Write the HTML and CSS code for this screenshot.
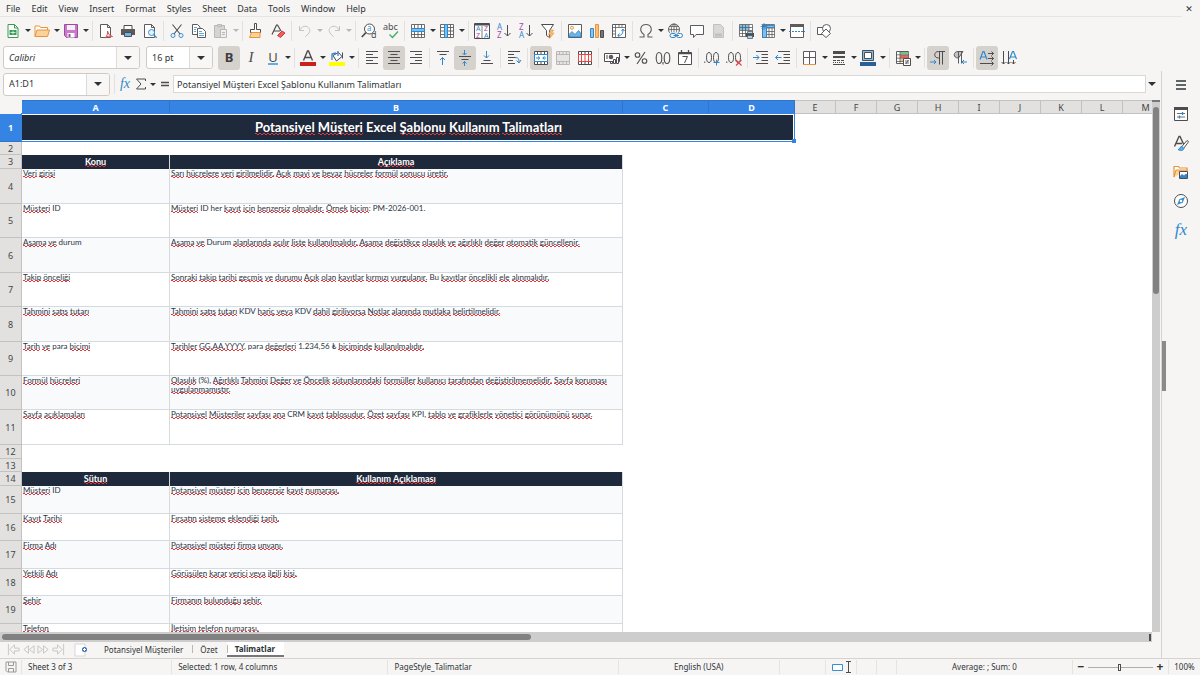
FILE: index.html
```html
<!DOCTYPE html>
<html lang="tr">
<head>
<meta charset="utf-8">
<title>Talimatlar</title>
<link rel="stylesheet" href="styles.css">
</head>
<body>
<div class="app">
<header class="menubar">
  <nav class="menus" aria-label="Menu">
    <button>File</button><button>Edit</button><button>View</button><button>Insert</button><button>Format</button><button>Styles</button><button>Sheet</button><button>Data</button><button>Tools</button><button>Window</button><button>Help</button>
  </nav>
  <button class="close" aria-label="Close">✕</button>
</header>

<div class="toolbar" role="toolbar" aria-label="Standard">
  <button class="tool" aria-label="New"><svg viewBox="0 0 16 16"><path d="M3 1.500h6.500l3.500 3.500v9.500H3z" fill="#fff" stroke="#3a9b56"/><path d="M9.500 1.500V5H13" fill="none" stroke="#3a9b56"/><path d="M4.500 7h7v5h-7z" fill="#3a9b56"/><path d="M5.500 9.500h5M8 7.500v4" stroke="#fff" stroke-width=".7"/></svg></button><button class="drop" aria-label="New options"></button>
  <button class="tool" aria-label="Open"><svg viewBox="0 0 16 16"><path d="M1 13.500V3h4.500l1 1.500h7V7" fill="#fff" stroke="#e8943c"/><path d="M1 13.500 3 7h12.500l-2 6.500z" fill="#fbd29a" stroke="#e8943c"/></svg></button><button class="drop" aria-label="Open options"></button>
  <button class="tool" aria-label="Save"><svg viewBox="0 0 16 16"><path d="M1.500 1.500h13v13h-11l-2-2z" fill="#c57bc8" stroke="#9a4ba0"/><path d="M4 2h8v5H4z" fill="#f8eef8"/><path d="M4.500 10h7v4.500h-7z" fill="#fff"/><path d="M5.500 11h2v3h-2z" fill="#9a4ba0"/></svg></button><button class="drop" aria-label="Save options"></button>
  <span class="sep"></span>
  <button class="tool" aria-label="Export as PDF"><svg viewBox="0 0 16 16"><path d="M2.500 1.500h7L12.500 4.500v10h-10z" fill="#fff" stroke="#5c5c5e"/><path d="M9.500 1.500v3h3" fill="none" stroke="#5c5c5e"/><path d="M7 15c2-2 3-4 2.500-7 1 3 2 5 5 5.500-2.500-.8-5.500-.3-7.500 1.500" fill="#fff" stroke="#e04848"/></svg></button>
  <button class="tool" aria-label="Print"><svg viewBox="0 0 16 16"><path d="M4 2.500h8v4H4z" fill="#fff" stroke="#4d4d4f"/><path d="M1 6h14v6H1z" fill="#5a5a5c"/><path d="M4.500 9.500h7v4h-7z" fill="#6cb5e8" stroke="#4d4d4f"/></svg></button>
  <button class="tool" aria-label="Print preview"><svg viewBox="0 0 16 16"><path d="M2.500 1.500h7l3 3v10h-10z" fill="#fff" stroke="#5c5c5e"/><path d="M9.500 1.500v3h3" fill="none" stroke="#5c5c5e"/><circle cx="9.500" cy="9.500" r="3" fill="#e5f2fb" stroke="#3a8fd0"/><path d="m11.700 11.700 3 3" stroke="#3a8fd0" stroke-width="1.300"/></svg></button>
  <span class="sep"></span>
  <button class="tool" aria-label="Cut"><svg viewBox="0 0 16 16" fill="none"><path d="M3.500 1.500 11 11M12.500 1.500 5 11" stroke="#4d4d4f" stroke-width="1.100"/><circle cx="4" cy="12.500" r="2" stroke="#3a8fd0"/><circle cx="12" cy="12.500" r="2" stroke="#3a8fd0"/></svg></button>
  <button class="tool" aria-label="Copy"><svg viewBox="0 0 16 16" fill="#fff" stroke="#5c5c5e"><path d="M1.500 1.500h5L9 4v7.500H1.500z"/><path d="M6.500 5.500h5l3 3v6h-8z"/><path d="M3 4.500h3M3 6.500h2M3 8.500h2M8 8.500h3M8 10.500h5M8 12.500h5" stroke="#3a8fd0" stroke-width=".8"/></svg></button>
  <button class="tool" aria-label="Paste" disabled><svg viewBox="0 0 16 16" fill="#d5d4d2" stroke="#b9b8b6"><path d="M1.500 2.500h10v12h-10z"/><path d="M4.500 1.500h4v2h-4z"/><path d="M7.500 6.500h6v8h-6z" fill="#f1f0ef"/><path d="M9 9.500h3M9 11.500h3"/></svg></button><button class="drop" aria-label="Paste options" disabled></button>
  <span class="sep"></span>
  <button class="tool" aria-label="Clone formatting"><svg viewBox="0 0 16 16"><path d="M6.500.5h2v6h4v3h-10v-3h4z" fill="#fff" stroke="#4d4d4f"/><path d="M3.500 9.500h8.500v5H1.500z" fill="#fbd29a" stroke="#e8943c"/></svg></button>
  <button class="tool" aria-label="Clear formatting"><svg viewBox="0 0 16 16" fill="none"><path d="M2 11.500 6.500 2h1L11 8M4 8h6" stroke="#4d4d4f" stroke-width="1.200"/><path d="m7.500 12.500 4.500-4.500 3 2-4.500 4.500z" fill="#e8605f" stroke="#d83a3a"/></svg></button>
  <span class="sep"></span>
  <button class="tool" aria-label="Undo" disabled><svg viewBox="0 0 16 16" fill="none" stroke="#c4c3c1"><path d="M2.500 3v4.500H7M2.500 7.500c2-4 6-5.500 9-3 2.500 2.500 1.500 5.500-3 9"/></svg></button><button class="drop" aria-label="Undo list" disabled></button>
  <button class="tool" aria-label="Redo" disabled><svg viewBox="0 0 16 16" fill="none" stroke="#c4c3c1"><path d="M13.500 3v4.500H9M13.500 7.500c-2-4-6-5.500-9-3-2.500 2.500-1.500 5.500 3 9"/></svg></button><button class="drop" aria-label="Redo list" disabled></button>
  <span class="sep"></span>
  <button class="tool" aria-label="Find and replace"><svg viewBox="0 0 16 16" fill="none"><circle cx="8.500" cy="6" r="5" fill="#fff" stroke="#4d4d4f"/><path d="M5 9.500.8 14" stroke="#4d4d4f" stroke-width="1.800"/><text x="6" y="8" font-size="8" fill="#3a8fd0">a</text><text x="10" y="15" font-size="9" fill="#4d4d4f">d</text></svg></button>
  <button class="tool" aria-label="Spelling"><svg viewBox="0 0 16 16" fill="none"><text x="0" y="7" font-size="9" fill="#4d4d4f">abc</text><path d="m6.500 11.500 3 3 5.500-6" stroke="#3fae62" stroke-width="1.300"/></svg></button>
  <span class="sep"></span>
  <button class="tool" aria-label="Row"><svg viewBox="0 0 16 16"><path d="M1.500 1.500h13v13h-13zM1.500 11.500h13M4.500 1.500v13M8 1.500v13M11.500 1.500v13" fill="#fff" stroke="#5c5c5e" stroke-width=".9"/><path d="M1.500 5.500h13v3h-13z" fill="#7cc0f0" stroke="#2f88cc"/></svg></button><button class="drop" aria-label="Row options"></button>
  <button class="tool" aria-label="Column"><svg viewBox="0 0 16 16"><path d="M1.500 1.500h13v13h-13zM1.500 4.500h13M1.500 8h13M1.500 11.500h13M11.500 1.500v13" fill="#fff" stroke="#5c5c5e" stroke-width=".9"/><path d="M5.500 1.500h3v13h-3z" fill="#7cc0f0" stroke="#2f88cc"/></svg></button><button class="drop" aria-label="Column options"></button>
  <span class="sep"></span>
  <button class="tool" aria-label="Sort"><svg viewBox="0 0 16 16"><path d="M.5.500h15v15H.5z" fill="#fff" stroke="#4d4d4f"/><path d="M1 1h14v1.500H1z" fill="#4d4d4f"/><path d="M8 3v12" stroke="#4d4d4f" stroke-width=".7"/><text x="2" y="8" font-size="7" fill="#2f88cc">A</text><text x="2" y="15" font-size="7" fill="#a34bb0">Z</text><text x="10" y="8" font-size="7" fill="#a34bb0">Z</text><text x="10" y="15" font-size="7" fill="#2f88cc">A</text></svg></button>
  <button class="tool" aria-label="Sort ascending"><svg viewBox="0 0 16 16"><text x="1" y="7" font-size="8" fill="#2f88cc">A</text><text x="1" y="15" font-size="8" fill="#a34bb0">Z</text><path d="M11.500 2v11M8.500 10l3 3 3-3" fill="none" stroke="#4d4d4f"/></svg></button>
  <button class="tool" aria-label="Sort descending"><svg viewBox="0 0 16 16"><text x="1" y="7" font-size="8" fill="#a34bb0">Z</text><text x="1" y="15" font-size="8" fill="#2f88cc">A</text><path d="M11.500 2v11M8.500 10l3 3 3-3" fill="none" stroke="#4d4d4f"/></svg></button>
  <button class="tool" aria-label="AutoFilter"><svg viewBox="0 0 16 16"><path d="M1.500 1.500h12L9.500 7.500v7l-3-2v-5z" fill="#fff" stroke="#4d4d4f"/><path d="m11 7-2.500 4.500h2L9.500 15.500 14 10h-2.500L13.500 7z" fill="#fbc078" stroke="#e8943c" stroke-width=".7"/></svg></button>
  <span class="sep"></span>
  <button class="tool" aria-label="Insert image"><svg viewBox="0 0 16 16"><path d="M1.500 1.500h13v13h-13z" fill="#fff" stroke="#5c5c5e"/><path d="M2 14v-2.500l3-3 3 3 3.500-4L14 10.500V14z" fill="#6cb5e8" stroke="#2a77b5" stroke-width=".7"/><circle cx="5" cy="4.800" r="1.500" fill="#fff" stroke="#e8943c"/></svg></button>
  <button class="tool" aria-label="Insert chart"><svg viewBox="0 0 16 16"><path d="M1.500 5.500h3v9h-3z" fill="#8cc6ef" stroke="#2f88cc"/><path d="M6.500 1.500h3v13h-3z" fill="#fbc078" stroke="#e8943c"/><path d="M11.500 7.500h3v7h-3z" fill="#77767b" stroke="#4d4d4f"/></svg></button>
  <button class="tool" aria-label="Insert pivot table"><svg viewBox="0 0 16 16"><path d="M1.500 1.500h13v13h-13z" fill="#fff" stroke="#5c5c5e"/><path d="M1.500 4.500h13M4.500 1.500v13M8 1.500v3M11 1.500v3M1.500 8h3M1.500 11h3" stroke="#5c5c5e" stroke-width=".8"/><path d="M7 12.500c4 0 5-2 5-6M10.500 8 12 6l1.500 2M8.500 10.500 6.800 12.500l1.700 1.500" fill="none" stroke="#2f88cc"/></svg></button>
  <span class="sep"></span>
  <button class="tool" aria-label="Special character"><svg viewBox="0 0 16 16"><path d="M1.500 14h4.500v-2.500C.5 8 2.500 1.500 8 1.500s7.500 6.500 2 10V14h4.500" fill="none" stroke="#5c5c5e" stroke-width="1.100"/></svg></button><button class="drop" aria-label="Characters"></button>
  <button class="tool" aria-label="Hyperlink"><svg viewBox="0 0 16 16" fill="none"><circle cx="7" cy="6.500" r="5.500" stroke="#5c5c5e"/><path d="M7 1v10M1.500 6.500h11M3 3.500h8" stroke="#5c5c5e" stroke-width=".8"/><ellipse cx="7" cy="6.500" rx="2.700" ry="5.500" stroke="#5c5c5e" stroke-width=".8"/><path d="M2.500 9.500h13.500v6.500H2.500z" fill="#f6f5f4"/><rect x="3" y="10.500" width="6" height="4" rx="2" stroke="#2f88cc"/><rect x="9.500" y="10.500" width="6" height="4" rx="2" stroke="#2f88cc"/><path d="M6.500 12.500h5.500" stroke="#2f88cc"/></svg></button>
  <button class="tool" aria-label="Comment"><svg viewBox="0 0 16 16"><path d="M1.500 2.500h13v9H7l-2.500 3v-3h-3z" fill="#fff" stroke="#5c5c5e"/></svg></button>
  <button class="tool" aria-label="Headers and footers" disabled><svg viewBox="0 0 16 16"><path d="M2.500 1.500h7l3 3v10h-10z" fill="#d9d8d6" stroke="#c2c1bf"/><path d="M4 10.500h7v3H4z" fill="#c2c1bf"/></svg></button>
  <span class="sep"></span>
  <button class="tool" aria-label="Print area"><svg viewBox="0 0 16 16"><path d="M1.500 1.500h13v12h-13z" fill="#fff"/><path d="M1.500 1.500h9.500v5.500H1.500z" fill="#7cc0f0"/><path d="M1.500 1.500h13v12h-13zM1.500 4.500h13M1.500 7.500h13M1.500 10.500h13M4.500 1.500v12M7.500 1.500v12M11 1.500v12" fill="none" stroke="#5c5c5e" stroke-width=".8"/><path d="M8 10h8v4H8z" fill="#4d4d4f"/><path d="M9.500 8.500h5v2h-5zM9.500 12.500h5v3h-5z" fill="#a6d3f2" stroke="#4d4d4f" stroke-width=".7"/></svg></button>
  <button class="tool" aria-label="Freeze rows and columns"><svg viewBox="0 0 16 16"><path d="M2.500 1.500h12v13h-12zM2.500 5h12M2.500 8.500h12M2.500 11.500h12M6.500 1.500v13M9 1.500v13M12 1.500v13" fill="#fff" stroke="#5c5c5e" stroke-width=".8"/><path d="M2.500 2.500h12v2h-8v10h-4z" fill="#7cc0f0" stroke="#2a77b5" stroke-width=".8"/><path d="M4 0v7M.5 3.500h7M1.500 1l5 5M6.500 1l-5 5" stroke="#2a77b5" stroke-width=".7"/></svg></button><button class="drop" aria-label="Freeze options"></button>
  <button class="tool" aria-label="Split window"><svg viewBox="0 0 16 16"><path d="M1.500 1.500h13v13h-13z" fill="#fff" stroke="#5c5c5e"/><path d="M1 1h14v3H1z" fill="#5c5c5e"/><path d="M0 8.500h16" stroke="#2f88cc" stroke-dasharray="2 1"/></svg></button>
  <span class="sep"></span>
  <button class="tool" aria-label="Draw functions"><svg viewBox="0 0 16 16" fill="#fff" stroke="#5c5c5e"><path d="M1.500 4.500h7v7h-7z"/><circle cx="10.500" cy="5.500" r="4"/><path d="m10 6 4.500 4.500-4.500 4-4.500-4z"/></svg></button>
</div>

<div class="toolbar" role="toolbar" aria-label="Formatting">
  <div class="combo font-name"><input class="italic" aria-label="Font name" value="Calibri"><button aria-label="Font list"></button></div>
  <div class="combo font-size"><input aria-label="Font size" value="16 pt"><button aria-label="Size list"></button></div>
  <button class="tool on letter bold" aria-label="Bold">B</button>
  <button class="tool letter ital" aria-label="Italic">I</button>
  <button class="tool letter under" aria-label="Underline"><span>U</span></button><button class="drop" aria-label="Underline options"></button>
  <span class="sep"></span>
  <button class="tool" aria-label="Font color"><svg viewBox="0 0 16 16"><path d="M3.500 10.500 7.500 1h1l4 9.500M5 7.500h6" fill="none" stroke="#4d4d4f" stroke-width="1.400"/><path d="M0 12h16v4H0z" fill="#c9211e"/></svg></button><button class="drop" aria-label="Font colors"></button>
  <button class="tool" aria-label="Highlighting"><svg viewBox="0 0 16 16"><path d="m4 5.500 5.500-3 3.500 4-5.500 4.500z" fill="#fff" stroke="#4d4d4f"/><path d="M3 3.500V10M3 4l4-1M9 1v5" fill="none" stroke="#2f88cc" stroke-width="1.300"/><path d="M13.500 2.500v6" stroke="#4d4d4f"/><path d="M0 12h16v4H0z" fill="#ff0"/></svg></button><button class="drop" aria-label="Highlight colors"></button>
  <span class="sep"></span>
  <button class="tool" aria-label="Align left"><svg viewBox="0 0 16 16" stroke="#4d4d4f"><path d="M2 1.500h12M2 4.500h7M2 7.500h12M2 10.500h7M2 13.500h12"/></svg></button>
  <button class="tool on" aria-label="Align center"><svg viewBox="0 0 16 16" stroke="#4d4d4f"><path d="M2 1.500h12M4.500 4.500h7M2 7.500h12M4.500 10.500h7M2 13.500h12"/></svg></button>
  <button class="tool" aria-label="Align right"><svg viewBox="0 0 16 16" stroke="#4d4d4f"><path d="M2 1.500h12M7 4.500h7M2 7.500h12M7 10.500h7M2 13.500h12"/></svg></button>
  <span class="sep"></span>
  <button class="tool" aria-label="Align top"><svg viewBox="0 0 16 16" fill="none" stroke="#4d4d4f"><path d="M2 1.500h12M4.500 4.500h7"/><path d="M7.500 15V7.500M5 10l2.500-2.500L10 10" stroke="#2f88cc"/></svg></button>
  <button class="tool on" aria-label="Center vertically"><svg viewBox="0 0 16 16" fill="none" stroke="#4d4d4f"><path d="M2 6.500h12M4.500 9.500h7"/><path d="M7.500 0v4.500M5.500 3l2 2 2-2M7.500 16v-4.500M5.500 13.500l2-2 2 2" stroke="#2f88cc"/></svg></button>
  <button class="tool" aria-label="Align bottom"><svg viewBox="0 0 16 16" fill="none" stroke="#4d4d4f"><path d="M4.500 10.500h7M2 13.500h12"/><path d="M7.500 1v7M5 5.500 7.500 8 10 5.500" stroke="#2f88cc"/></svg></button>
  <span class="sep"></span>
  <button class="tool" aria-label="Wrap text"><svg viewBox="0 0 16 16" fill="none" stroke="#4d4d4f"><path d="M2 1.500h12M2 4.500h6M2 7.500h8M2 10.500h5M2 13.500h7"/><path d="M9 7.500c3 0 4 1 4 4.500M10.500 10.500 13 13l2-3" stroke="#2f88cc"/></svg></button>
  <span class="sep"></span>
  <button class="tool on" aria-label="Merge and center cells"><svg viewBox="0 0 16 16"><path d="M1.500 1.500h13v13h-13zM4.500 1.500v3M8 1.500v3M11.500 1.500v3M4.500 11.500v3M8 11.500v3M11.500 11.500v3" fill="#fff" stroke="#4d4d4f"/><path d="M1.500 4.500h13v7h-13z" fill="#fff" stroke="#2f88cc"/><path d="M3 8h3.500M10 8h3M5 6.500 6.800 8 5 9.500M11.500 6.500 9.700 8l1.800 1.500" fill="none" stroke="#2f88cc"/></svg></button>
  <button class="tool" aria-label="Merge cells" disabled><svg viewBox="0 0 16 16"><path d="M1.500 1.500h13v13h-13zM1.500 4.500h13M1.500 11.500h13M4.500 1.500v3M8 1.500v3M11.500 1.500v3M4.500 11.500v3M8 11.500v3M11.500 11.500v3" fill="#e6e5e3" stroke="#b9b8b6"/></svg></button>
  <button class="tool" aria-label="Split cells"><svg viewBox="0 0 16 16"><path d="M1.500 1.500h13v13h-13zM4.500 1.500v3M8 1.500v3M11.500 1.500v3M4.500 11.500v3M8 11.500v3M11.500 11.500v3" fill="#fff" stroke="#4d4d4f"/><path d="M1.500 4.500h13v7h-13zM4.500 4.500v7M8 4.500v7M11.500 4.500v7" fill="#fff" stroke="#e04848"/></svg></button>
  <span class="sep"></span>
  <button class="tool" aria-label="Currency"><svg viewBox="0 0 16 16"><path d="M.5 3.500h15v8H.5z" fill="#fff" stroke="#4d4d4f"/><circle cx="7" cy="7" r="2.300" fill="#5c5c5e"/><path d="M3 5v4" stroke="#4d4d4f"/><path d="M6.500 11.500h2v2h-2zM9.500 9.500h2v4h-2zM12.500 7.500h2v6h-2z" fill="#fff" stroke="#4d4d4f"/></svg></button><button class="drop" aria-label="Currency formats"></button>
  <button class="tool" aria-label="Percent"><svg viewBox="0 0 16 16" fill="none" stroke="#4d4d4f" stroke-width="1.100"><circle cx="4.500" cy="5" r="2.300"/><circle cx="11.500" cy="11" r="2.300"/><path d="M12 2 4 14"/></svg></button>
  <button class="tool" aria-label="Number"><svg viewBox="0 0 16 16" fill="none" stroke="#4d4d4f" stroke-width="1.100"><ellipse cx="4" cy="8" rx="2.800" ry="5.500"/><ellipse cx="12" cy="8" rx="2.800" ry="5.500"/><path d="M8 12v2.500"/></svg></button>
  <button class="tool" aria-label="Date"><svg viewBox="0 0 16 16"><path d="M1.500 2.500h13v12h-13z" fill="#fff" stroke="#4d4d4f"/><path d="M1.500 3.500h13M4.500 0v4M11.500 0v4" stroke="#4d4d4f" stroke-width="1.300"/><path d="M5.500 6.500h5L7.500 13" fill="none" stroke="#4d4d4f"/></svg></button>
  <span class="sep"></span>
  <button class="tool" aria-label="Add decimal place"><svg viewBox="0 0 16 16" fill="none" stroke="#4d4d4f"><ellipse cx="5" cy="7.500" rx="2.500" ry="5"/><ellipse cx="12" cy="7.500" rx="2.500" ry="5"/><path d="M.8 11.500v1.500"/><path d="M12.500 9.500v6M9.500 12.500h6" stroke="#2f88cc"/></svg></button>
  <button class="tool" aria-label="Delete decimal place"><svg viewBox="0 0 16 16" fill="none" stroke="#4d4d4f"><ellipse cx="5" cy="7.500" rx="2.500" ry="5"/><ellipse cx="12" cy="7.500" rx="2.500" ry="5"/><path d="M.8 11.500v1.500"/><path d="m10 10 5.500 5.500m0-5.500L10 15.500" stroke="#e04848" stroke-width="1.200"/></svg></button>
  <span class="sep"></span>
  <button class="tool" aria-label="Increase indent"><svg viewBox="0 0 16 16" fill="none" stroke="#4d4d4f"><path d="M3 1.500h12M8.500 4.500H15M8.500 7.500H15M8.500 10.500H15M3 13.500h12"/><path d="M0 7.500h6M3.500 5 6 7.500 3.500 10" stroke="#2f88cc"/></svg></button>
  <button class="tool" aria-label="Decrease indent"><svg viewBox="0 0 16 16" fill="none" stroke="#4d4d4f"><path d="M3 1.500h12M8.500 4.500H15M8.500 7.500H15M8.500 10.500H15M3 13.500h12"/><path d="M.5 7.500h6M3 5 .5 7.500 3 10" stroke="#2f88cc"/></svg></button>
  <span class="sep"></span>
  <button class="tool" aria-label="Borders"><svg viewBox="0 0 16 16"><path d="M1.500 1.500h12v13h-12z" fill="#fff" stroke="#5c5c5e"/><path d="M7.500 1.500v13M1.500 7.500h12" stroke="#5c5c5e"/><path d="M1 14.500h13" stroke="#e8943c"/></svg></button><button class="drop" aria-label="Border options"></button>
  <button class="tool" aria-label="Border style"><svg viewBox="0 0 16 16" stroke="#4d4d4f"><path d="M2 2.500h12" stroke-width="3"/><path d="M2 7h12" stroke-width="2"/><path d="M2 10.500h12" stroke-dasharray="3 1"/><path d="M2 12.500h12" stroke-dasharray="1 1"/><path d="M2 14.500h12"/></svg></button><button class="drop" aria-label="Border styles"></button>
  <button class="tool" aria-label="Border color"><svg viewBox="0 0 16 16"><path d="M2.500.5h11v10h-11z" fill="#7cc0f0" stroke="#4d4d4f"/><path d="M4.500 2.500h7v6h-7z" fill="#fff" stroke="#4d4d4f"/><path d="M0 12h16v4H0z" fill="#2a6099"/></svg></button><button class="drop" aria-label="Border colors"></button>
  <span class="sep"></span>
  <button class="tool" aria-label="Conditional formatting"><svg viewBox="0 0 16 16"><path d="M1.500 1.500h12v12h-12z" fill="#fff" stroke="#5c5c5e"/><path d="M5 2h8.500v2.500H5z" fill="#6cc788"/><path d="M5 5h8.500v3H5z" fill="#e8695f"/><path d="M5 8.500h4v3H5z" fill="#fbc078"/><path d="M1.500 4.800h12M1.500 8.200h12M1.500 11.500h12M5 1.500v12" stroke="#5c5c5e" stroke-width=".8"/><path d="M8.500 8.500h7v7h-7z" fill="#fff" stroke="#4d4d4f"/><path d="M10 11h4M10 13h4M13.300 10l-2.500 4" stroke="#4d4d4f" stroke-width=".8"/></svg></button><button class="drop" aria-label="Conditions"></button>
  <span class="sep"></span>
  <button class="tool on" aria-label="Left to right"><svg viewBox="0 0 16 16" fill="none" stroke="#4d4d4f"><path d="M15 1.500H8.500c-5 0-5 6.500 0 6.500h1M9.500 1.500v13M12.500 1.500v13"/><path d="M0 12h6M4 10l2 2-2 2" stroke="#2f88cc"/></svg></button>
  <button class="tool" aria-label="Right to left"><svg viewBox="0 0 16 16" fill="none" stroke="#5c5c5e"><path d="M11 1.500H6c-5 0-5 6.500 0 6.500h.5z" fill="#c4c3c1"/><path d="M6.500 1.500v12M9.500 1.500v12"/><path d="M15 12H9.500M12 10l-2 2 2 2" stroke="#2f88cc"/></svg></button>
  <span class="sep"></span>
  <button class="tool on" aria-label="Text direction horizontal"><svg viewBox="0 0 16 16" fill="none" stroke="#4d4d4f"><path d="m1 9.500 3-8h1l3 8M2 7h5" stroke="#2f88cc" stroke-width="1.200"/><path d="M9 3.500h5.500M9 8.500h5.500M1 13.500h13.500M12.500 1.500l2 2-2 2M12.500 6.500l2 2-2 2M12.500 11.500l2 2-2 2"/></svg></button>
  <button class="tool" aria-label="Text direction vertical"><svg viewBox="0 0 16 16" fill="none" stroke="#4d4d4f"><path d="m8.500 9 3-7.500h1l3 7.500M9.500 7h5" stroke="#2f88cc" stroke-width="1.200"/><path d="M2.500 1v13M7.500 1v13M12.500 10v4M.5 12l2 2 2-2M5.500 12l2 2 2-2M10.500 12l2 2 2-2"/></svg></button>
</div>

<div class="workspace">
  <main class="document">
    <div class="formula-bar">
      <div class="combo name-box"><input aria-label="Name box" value="A1:D1"><button aria-label="Names"></button></div>
      <span class="sep"></span>
      <button class="mini fx" aria-label="Function wizard">fx</button>
      <button class="mini" aria-label="Sum"><svg viewBox="0 0 12 12"><path d="M10.500 3V1h-9L6 6 1.500 11h9V9" fill="none" stroke="#4d4d4f"/></svg></button><button class="drop" aria-label="Functions"></button>
      <button class="mini equals" aria-label="Formula"><svg viewBox="0 0 12 12"><path d="M2 4.500h8M2 7.500h8" stroke="#4d4d4f" stroke-width="1.300"/></svg></button>
      <input class="formula" aria-label="Input line" value="Potansiyel Müşteri Excel Şablonu Kullanım Talimatları">
      <button class="expand" aria-label="Expand formula bar"></button>
    </div>

    <div class="grid-row">
      <div class="sheet">
        <table>
          <colgroup><col class="c-num"><col class="c-a"><col class="c-b"><col class="c-c"><col class="c-d"><col class="c-e"><col class="c-e"><col class="c-e"><col class="c-e"><col class="c-e"><col class="c-e"><col class="c-e"><col class="c-e"><col class="c-m"></colgroup>
          <thead>
            <tr><td class="corner"></td><th class="sel">A</th><th class="sel">B</th><th class="sel">C</th><th class="sel">D</th><th>E</th><th>F</th><th>G</th><th>H</th><th>I</th><th>J</th><th>K</th><th>L</th><th>M</th></tr>
          </thead>
          <tbody>
            <tr class="title-row"><th class="sel">1</th><td class="title" colspan="4"><u>Potansiyel</u> <u>Müşteri</u> Excel <u>Şablonu</u> <u>Kullanım</u> <u>Talimatları</u><span class="selection"></span></td></tr>
            <tr class="h13"><th>2</th><td colspan="4"></td></tr>
            <tr class="h14 head"><th>3</th><td><u>Konu</u></td><td><u>Açıklama</u></td></tr>
            <tr class="h35 data tint"><th>4</th><td><u>Veri</u> <u>girişi</u></td><td><u>Sarı</u> <u>hücrelere</u> <u>veri</u> <u>girilmelidir.</u> <u>Açık</u> <u>mavi</u> <u>ve</u> <u>beyaz</u> <u>hücreler</u> <u>formül</u> <u>sonucu</u> <u>üretir.</u></td></tr>
            <tr class="h34 data"><th>5</th><td><u>Müşteri</u> ID</td><td><u>Müşteri</u> ID her <u>kayıt</u> <u>için</u> <u>benzersiz</u> <u>olmalıdır.</u> <u>Örnek</u> <u>biçim</u>: PM-2026-001.</td></tr>
            <tr class="h35 data tint"><th>6</th><td><u>Aşama</u> <u>ve</u> durum</td><td><u>Aşama</u> <u>ve</u> Durum <u>alanlarında</u> <u>açılır</u> <u>liste</u> <u>kullanılmalıdır.</u> <u>Aşama</u> <u>değiştikçe</u> <u>olasılık</u> <u>ve</u> <u>ağırlıklı</u> <u>değer</u> <u>otomatik</u> <u>güncellenir.</u></td></tr>
            <tr class="h34 data"><th>7</th><td><u>Takip</u> <u>önceliği</u></td><td><u>Sonraki</u> <u>takip</u> <u>tarihi</u> <u>geçmiş</u> <u>ve</u> <u>durumu</u> <u>Açık</u> <u>olan</u> <u>kayıtlar</u> <u>kırmızı</u> <u>vurgulanır.</u> Bu <u>kayıtlar</u> <u>öncelikli</u> <u>ele</u> <u>alınmalıdır.</u></td></tr>
            <tr class="h35 data tint"><th>8</th><td><u>Tahmini</u> <u>satış</u> <u>tutarı</u></td><td><u>Tahmini</u> <u>satış</u> <u>tutarı</u> KDV <u>hariç</u> <u>veya</u> KDV <u>dahil</u> <u>giriliyorsa</u> <u>Notlar</u> <u>alanında</u> <u>mutlaka</u> <u>belirtilmelidir.</u></td></tr>
            <tr class="h34 data"><th>9</th><td><u>Tarih</u> <u>ve</u> para <u>biçimi</u></td><td><u>Tarihler</u> <u>GG.AA.YYYY</u>, para <u>değerleri</u> 1.234,56 ₺ <u>biçiminde</u> <u>kullanılmalıdır.</u></td></tr>
            <tr class="h34 data tint"><th>10</th><td><u>Formül</u> <u>hücreleri</u></td><td><u>Olasılık</u> (%), <u>Ağırlıklı</u> <u>Tahmini</u> <u>Değer</u> <u>ve</u> <u>Öncelik</u> <u>sütunlarındaki</u> <u>formüller</u> <u>kullanıcı</u> <u>tarafından</u> <u>değiştirilmemelidir.</u> <u>Sayfa</u> <u>koruması</u> <u>uygulanmamıştır.</u></td></tr>
            <tr class="h35 data"><th>11</th><td><u>Sayfa</u> <u>açıklamaları</u></td><td><u>Potansiyel</u> <u>Müşteriler</u> <u>sayfası</u> <u>ana</u> CRM <u>kayıt</u> <u>tablosudur.</u> <u>Özet</u> <u>sayfası</u> KPI, <u>tablo</u> <u>ve</u> <u>grafiklerle</u> <u>yönetici</u> <u>görünümünü</u> <u>sunar.</u></td></tr>
            <tr class="h14"><th>12</th><td colspan="4"></td></tr>
            <tr class="h13"><th>13</th><td colspan="4"></td></tr>
            <tr class="h14 head"><th>14</th><td><u>Sütun</u></td><td><u>Kullanım</u> <u>Açıklaması</u></td></tr>
            <tr class="h28 data tint"><th>15</th><td><u>Müşteri</u> ID</td><td><u>Potansiyel</u> <u>müşteri</u> <u>için</u> <u>benzersiz</u> <u>kayıt</u> <u>numarası.</u></td></tr>
            <tr class="h27 data"><th>16</th><td><u>Kayıt</u> <u>Tarihi</u></td><td><u>Fırsatın</u> <u>sisteme</u> <u>eklendiği</u> <u>tarih.</u></td></tr>
            <tr class="h28 data tint"><th>17</th><td><u>Firma</u> <u>Adı</u></td><td><u>Potansiyel</u> <u>müşteri</u> <u>firma</u> <u>unvanı.</u></td></tr>
            <tr class="h27 data"><th>18</th><td><u>Yetkili</u> <u>Adı</u></td><td><u>Görüşülen</u> <u>karar</u> <u>verici</u> <u>veya</u> <u>ilgili</u> <u>kişi.</u></td></tr>
            <tr class="h28 data tint"><th>19</th><td><u>Şehir</u></td><td><u>Firmanın</u> <u>bulunduğu</u> <u>şehir.</u></td></tr>
            <tr class="h27 data"><th></th><td><u>Telefon</u></td><td><u>İletişim</u> <u>telefon</u> <u>numarası.</u></td></tr>
          </tbody>
        </table>
      </div>
      <div class="vscroll"><div class="vthumb"></div></div>
    </div>

    <div class="hscroll"><div class="hthumb"></div><span class="hgrip"></span></div>

    <nav class="tabs" aria-label="Sheets">
      <button class="nav" aria-label="First sheet"><svg viewBox="0 0 14 14"><path d="M1.500 1v12M13 5.500H8V2L3 7l5 5V8.500h5z"/></svg></button><button class="nav" aria-label="Previous sheet"><svg viewBox="0 0 14 14"><path d="M7 3 2 7l5 4zM13 3 8 7l5 4z"/></svg></button><button class="nav" aria-label="Next sheet"><svg viewBox="0 0 14 14"><path d="m1 3 5 4-5 4zM7 3l5 4-5 4z"/></svg></button><button class="nav" aria-label="Last sheet"><svg viewBox="0 0 14 14"><path d="M12.500 1v12M1 5.500h5V2l5 5-5 5V8.500H1z"/></svg></button>
      <button class="add" aria-label="Add sheet"><svg viewBox="0 0 14 14"><path d="M1 1h10v12H1z" fill="#fff" stroke="#c8c7c5" stroke-width=".7"/><circle cx="10.500" cy="6.500" r="2.500" fill="#3a6fb5"/><path d="M10.500 5v3M9 6.500h3" stroke="#fff"/></svg></button>
      <button class="tab">Potansiyel Müşteriler</button><button class="tab">Özet</button><button class="tab active">Talimatlar</button>
    </nav>
  </main>

  <aside class="sidebar" aria-label="Sidebar">
    <span class="splitter"></span>
    <button aria-label="Sidebar settings"><svg viewBox="0 0 16 16"><path d="M3 4h10M3 8h10M3 12h10" stroke="#2e3436" stroke-width="1.500"/></svg></button>
    <button aria-label="Properties"><svg viewBox="0 0 16 16"><path d="M1.500 1.500h13v13h-13z" fill="#fff" stroke="#4d4d4f"/><path d="M1 1h14v3H1z" fill="#4d4d4f"/><path d="M4 7.500h8M4 11h8" stroke="#4d4d4f" stroke-width=".8"/><path d="M9.500 6v3M6.500 9.500v3" stroke="#2f88cc" stroke-width="1.300"/></svg></button>
    <button aria-label="Styles"><svg viewBox="0 0 16 16" fill="none"><path d="m1.500 11.500 4.500-10h1l4 8.500M3 8.500h6" stroke="#4d4d4f" stroke-width="1.400"/><path d="m8.500 12 5-6c2-1 2 .5 1.500 1.500l-4.500 6z" fill="#fff" stroke="#4d4d4f"/><path d="M5 14.500c3 0 1-3 4-3l2 2c-1 2.500-4 2.500-6 1" fill="#62aee6" stroke="#2f88cc"/></svg></button>
    <button aria-label="Gallery"><svg viewBox="0 0 16 16"><path d="M1 13V2.500h4.500l1 1.500H14v3H3z" fill="#fff" stroke="#e8943c" stroke-width="1.200"/><path d="M1 13 3 6h12" fill="#fbd29a" stroke="#e8943c"/><path d="M6.500 7.500h8v7h-8z" fill="#fff" stroke="#4d4d4f"/><path d="M7 14v-2l2-2 2 1.500 2-2 1 1V14z" fill="#2f88cc"/></svg></button>
    <button aria-label="Navigator"><svg viewBox="0 0 16 16"><circle cx="8" cy="8" r="6.500" fill="#fff" stroke="#4d4d4f"/><path d="M12 4 9.700 9.700 4 12l2.300-5.700z" fill="#3a8fd0"/><circle cx="8" cy="8" r="1.200" fill="#fff"/></svg></button>
    <button class="fx" aria-label="Functions">fx</button>
  </aside>
</div>

<footer class="status">
  <span class="cell center"><svg class="disk" viewBox="0 0 12 12" fill="none" stroke="#9a9996"><path d="M1 1h10v10H2.500L1 9.500zM3.500 1v3.500h5V1M3.500 11V7.500h5V11"/></svg></span>
  <span class="cell">Sheet 3 of 3</span>
  <span class="cell">Selected: 1 row, 4 columns</span>
  <span class="cell">PageStyle_Talimatlar</span>
  <span class="cell center">English (USA)</span>
  <span class="cell"></span>
  <span class="cell center"><svg class="mode" viewBox="0 0 20 12" fill="none"><path d="M1.500 3.500h10v6h-10z" fill="#fff" stroke="#3a8fd0"/><path d="M15 .5h5M15 11.500h5M17.500.5v11" stroke="#4d4d4f"/></svg></span>
  <span class="cell"></span>
  <span class="cell"></span>
  <span class="cell center">Average: ; Sum: 0</span>
  <span class="cell zoom"><button aria-label="Zoom out">−</button><input type="range" aria-label="Zoom" min="0" max="200" value="98"><button aria-label="Zoom in">+</button></span>
  <span class="cell center">100%</span>
</footer>
</div>
</body>
</html>
```
FILE: styles.css
```css
* { box-sizing: border-box; }
body {
  margin: 0;
  background: #f6f5f4;
  color: #2e3436;
  font: 8px/12px "Noto Sans", "Open Sans", sans-serif;
}
button, input { font: inherit; color: inherit; }
button { border: 0; padding: 0; background: none; }
svg { display: block; overflow: visible; }
svg text { font-family: "Noto Sans", sans-serif; }
.app { display: flex; flex-direction: column; height: 100vh; overflow: hidden; }

.menubar { display: flex; height: 17px; justify-content: space-between; }
.menus { display: flex; flex: 1; border-bottom: 1px solid #e6e5e3; margin-right: 16px; padding-left: 1px; }
.menus button { padding: 1px 6px 0 5px; font-size: 9px; }
.close { width: 16px; margin-left: -14px; padding-right: 6px; font: bold 9px "DejaVu Sans", sans-serif; }

.toolbar { display: flex; align-items: center; height: 27px; padding-left: 2px; flex-shrink: 0; }
.tool { display: grid; place-items: center; flex: none; width: 22px; height: 24px; border-radius: 3px; }
.tool svg { width: 16px; height: 16px; }
.tool.on { background: #d5d1cd; }
.drop { flex: none; width: 7px; height: 20px; display: grid; place-items: center; }
.drop::before, .combo button::before, .expand::before {
  content: "";
  border: 3px solid transparent;
  border-top-color: #2e3436;
  border-bottom: 0;
}
.drop:disabled::before { border-top-color: #b9b8b6; }
.sep { flex: none; width: 1px; height: 20px; margin: 0 2px; background: #e3e1df; }
.drop + .sep { margin-left: 3px; }

.combo { display: flex; flex: none; height: 23px; border: 1px solid #cfcac6; border-radius: 3px; background: #fff; overflow: hidden; }
.combo input { flex: 1; min-width: 0; border: 0; padding: 0 5px; background: none; outline: 0; font-size: 9px; }
.combo button { display: grid; place-items: center; width: 23px; border-left: 1px solid #dedad7; background: #f8f7f6; }
.combo button::before, .expand::before { border-width: 4px 4px 0; }
.combo .italic { font-style: italic; }
.font-name { width: 137px; margin: 0 6px 0 1px; }
.font-size { width: 67px; margin-right: 5px; }
.letter { font: 13px/15px "Noto Sans", sans-serif; color: #4d4d4f; }
.letter.bold { font-weight: 700; color: #3d3d3f; }
.letter.ital { font-family: "Liberation Serif", serif; font-style: italic; font-size: 15px; }
.under span { height: 14px; line-height: 13px; border-bottom: 2px solid #62aee6; }

.workspace { display: flex; flex: 1; min-height: 0; }
.document { display: flex; flex-direction: column; flex: 1; min-width: 0; }
.formula-bar { display: flex; align-items: center; height: 29px; padding: 0 4px 3px 3px; flex-shrink: 0; }
.name-box { width: 107px; margin-right: 2px; }
.mini { display: grid; place-items: center; width: 16px; height: 20px; }
.mini svg { width: 12px; height: 12px; }
.equals { width: 17px; }
.fx { font: italic 14px/16px "Liberation Serif", serif; color: #2f88cc; }
.formula { flex: 1; min-width: 0; height: 18px; padding: 0 3px; border: 1px solid #dad8d5; background: #fff; font-size: 9px; }
.expand { display: grid; place-items: center; width: 11px; height: 20px; }

.grid-row { display: flex; flex: 1; min-height: 0; margin-right: 1px; }
.sheet { flex: 1; min-width: 0; background: #fff; overflow: hidden; }
table { width: 1169px; border-spacing: 0; table-layout: fixed; }
.c-num { width: 22px; }
.c-a { width: 148px; }
.c-b { width: 453px; }
.c-c { width: 86px; }
.c-d { width: 86px; }
.c-e { width: 41px; }
.c-m { width: 46px; }
th, td { padding: 0; height: inherit; overflow: hidden; }
thead tr { height: 14px; line-height: 11px; }
th { background: #e2e1df; border-right: 1px solid #c3c2c0; border-bottom: 1px solid #c3c2c0; color: #454545; font-size: 9px; font-weight: 400; line-height: 11px; }
thead th { border-top: 1px solid #c3c2c0; }
.corner { background: #f6f5f4; }
th.sel { background: #3584e4; border-color: #2f75ca; color: #fff; font-weight: 700; }
.title-row { height: 28px; }
.h13 { height: 13px; }
.h14 { height: 14px; }
.h27 { height: 27px; }
.h28 { height: 28px; }
.h34 { height: 34px; }
.h35 { height: 35px; }
td { font-family: Lato, "Noto Sans", sans-serif; }
.title { position: relative; padding-bottom: 3px; background: #1e293b; color: #fff; text-align: center; font-size: 13px; font-weight: 700; line-height: 16px; overflow: visible; }
.selection { position: absolute; inset: 0 1px 1px 0; border: 1px solid #fff; border-width: 1px 1px 1px 0; outline: 1px solid #3584e4; }
.selection::after { content: ""; position: absolute; right: -3px; bottom: -3px; width: 4px; height: 4px; background: #3584e4; }
.head td { padding-bottom: 2px; background: #1e293b; color: #fff; border-right: 1px solid #d5dade; text-align: center; font-size: 9px; font-weight: 700; line-height: 11px; }
.data td { border-right: 1px solid #d5dade; border-bottom: 1px solid #d5dade; padding: 0 1px; vertical-align: top; color: #2b3544; line-height: 9px; }
.tint td { background: #f8fafc; }
u {
  text-decoration: none;
  background:
    repeating-linear-gradient(90deg, #e5383d 0 2px, transparent 2px 4px) 0 calc(100% - 1px) / 100% 1px no-repeat,
    repeating-linear-gradient(90deg, transparent 0 2px, #e5383d 2px 4px) 0 100% / 100% 1px no-repeat;
}

.vscroll { width: 8px; padding: 5px 1px; background: #cdcdcd; border-top: 2px solid #77767b; }
.vthumb { height: 36%; border-radius: 3px; background: #818181; }
.hscroll { display: flex; align-items: center; justify-content: space-between; height: 10px; margin-right: 9px; padding: 0 1px 0 2px; background: #cdcdcd; flex-shrink: 0; }
.hthumb { width: 46%; height: 6px; border-radius: 3px; background: #818181; }
.hgrip { width: 2px; height: 7px; background: #4d4d4f; }

.tabs { display: flex; align-items: center; height: 16px; padding: 0 0 1px 6px; flex-shrink: 0; }
.nav { width: 15px; }
.nav svg { width: 15px; height: 13px; fill: none; stroke: #c5c4c2; }
.add { margin: 0 8px; }
.add svg { width: 14px; height: 14px; }
.tab { position: relative; padding: 0 9px 0 8px; height: 15px; }
.tab + .tab::before { content: ""; position: absolute; left: 0; top: 3px; height: 8px; width: 1px; background: #b9b8b6; }
.tab.active { background: #fff; font-weight: 700; border-bottom: 2px solid #77767b; }

.sidebar { position: relative; display: flex; flex-direction: column; align-items: center; gap: 9px; width: 39px; padding-top: 4px; border-left: 1px solid #d5d2cf; }
.sidebar button { height: 20px; }
.sidebar svg { width: 16px; height: 16px; }
.sidebar .fx { font-size: 17px; }
.splitter { position: absolute; left: 0; top: 46%; width: 4px; height: 50px; background: #8b8a88; }

.status { display: grid; grid-template-columns: 22px 150fr 216fr 230fr 161fr 46px 31px 20px 20px 176fr 96px 31px; align-items: center; height: 17px; border-top: 1px solid #d5d2cf; flex-shrink: 0; }
.cell { display: flex; align-items: center; height: 14px; padding-left: 6px; border-right: 1px solid #e6e4e2; white-space: nowrap; }
.cell:last-child { border: 0; }
.cell.center { justify-content: center; padding: 0; }
.disk { width: 12px; height: 12px; }
.mode { width: 20px; height: 12px; }
.zoom { padding: 0 3px; gap: 2px; }
.zoom button { font: bold 12px/12px "Noto Sans", sans-serif; width: 10px; }
.zoom input { flex: 1; min-width: 0; height: 12px; margin: 0; appearance: none; background: linear-gradient(#b0aeac, #b0aeac) center / 100% 1px no-repeat; }
.zoom input::-webkit-slider-thumb { appearance: none; width: 3px; height: 7px; border: 1px solid #4d4d4f; background: #fff; }
```
